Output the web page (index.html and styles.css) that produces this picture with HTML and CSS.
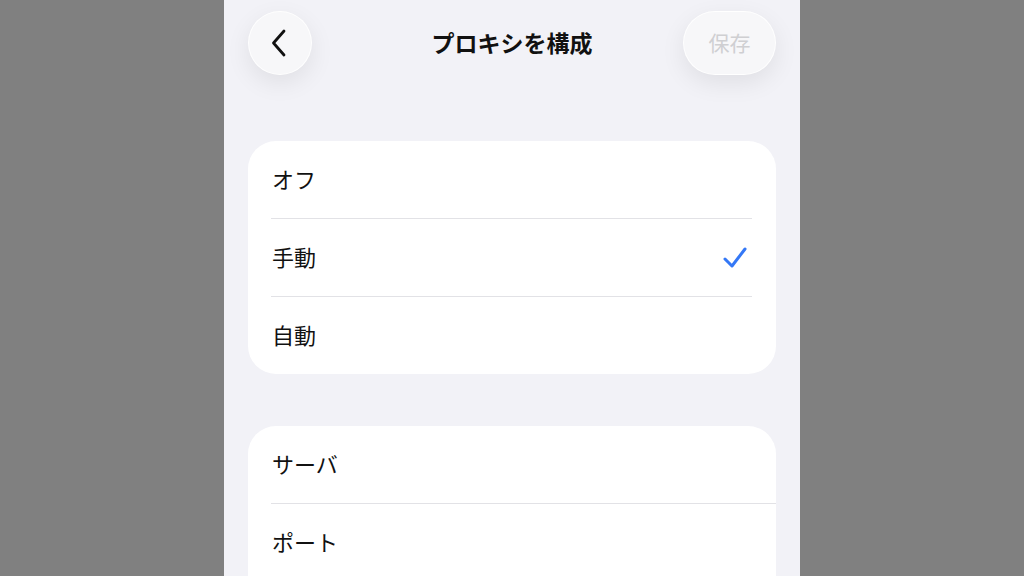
FILE: index.html
```html
<!DOCTYPE html>
<html lang="ja">
<head>
    <meta charset="UTF-8">
    <meta name="viewport" content="width=device-width, initial-scale=1.0">
    <title>プロキシを構成</title>
    <link rel="stylesheet" href="styles.css">
</head>
<body>
    <div class="screen">
        <div class="nav">
            <button class="round back" aria-label="戻る">
                <svg width="22" height="32" viewBox="0 0 22 32">
                    <path d="M15 4 L4.5 16 L15 28" fill="none" stroke="#111" stroke-width="2.8" stroke-linecap="round" stroke-linejoin="round"/>
                </svg>
            </button>
            <h1 class="title">プロキシを構成</h1>
            <button class="round save">保存</button>
        </div>

        <div class="group">
            <div class="row">オフ</div>
            <div class="sep"></div>
            <div class="row">手動
                <svg class="check" width="26" height="24" viewBox="0 0 26 24">
                    <path d="M3 13 L10 20 L23 3" fill="none" stroke="#3478f6" stroke-width="3" stroke-linecap="round" stroke-linejoin="round"/>
                </svg>
            </div>
            <div class="sep"></div>
            <div class="row">自動</div>
        </div>

        <div class="group second">
            <div class="row">サーバ</div>
            <div class="sep full"></div>
            <div class="row">ポート</div>
        </div>
    </div>
</body>
</html>
```

FILE: styles.css
```css
body {
    margin: 0;
    background: #808080;
    font-family: "Noto Sans CJK JP", "Noto Sans", sans-serif;
    display: flex;
    justify-content: center;
    height: 576px;
    overflow: hidden;
}
.screen {
    width: 576px;
    height: 576px;
    background: #f2f2f7;
    padding: 0 24px;
    box-sizing: border-box;
    overflow: hidden;
}
.nav {
    display: grid;
    grid-template-columns: 1fr auto 1fr;
    align-items: center;
    padding-top: 11px;
    height: 64px;
}
.round {
    height: 64px;
    border: 1px solid rgba(255, 255, 255, 0.9);
    border-radius: 32px;
    background: #f7f7f9;
    box-shadow: 0 8px 24px rgba(0, 0, 0, 0.08);
    display: flex;
    align-items: center;
    justify-content: center;
    padding: 0;
}
.back {
    width: 64px;
}
.save {
    width: 93px;
    justify-self: end;
    font-family: inherit;
    font-size: 21px;
    color: #cfcfd2;
    padding-bottom: 2px;
}
.title {
    margin: 0;
    font-size: 23px;
    font-weight: 700;
    color: #111;
    padding-bottom: 3px;
}
.group {
    margin-top: 66px;
    background: #fff;
    border-radius: 28px;
    overflow: hidden;
}
.group.second {
    margin-top: 52px;
    border-bottom-left-radius: 0;
    border-bottom-right-radius: 0;
}
.row {
    height: 77px;
    padding: 0 28px 3px 24px;
    box-sizing: border-box;
    display: flex;
    align-items: center;
    justify-content: space-between;
    font-size: 22px;
    color: #111;
}
.check {
    margin-top: 3px;
}
.sep {
    height: 1px;
    background: #e2e2e6;
    margin: 0 24px 0 23px;
}
.sep.full {
    margin-right: 0;
}
```
